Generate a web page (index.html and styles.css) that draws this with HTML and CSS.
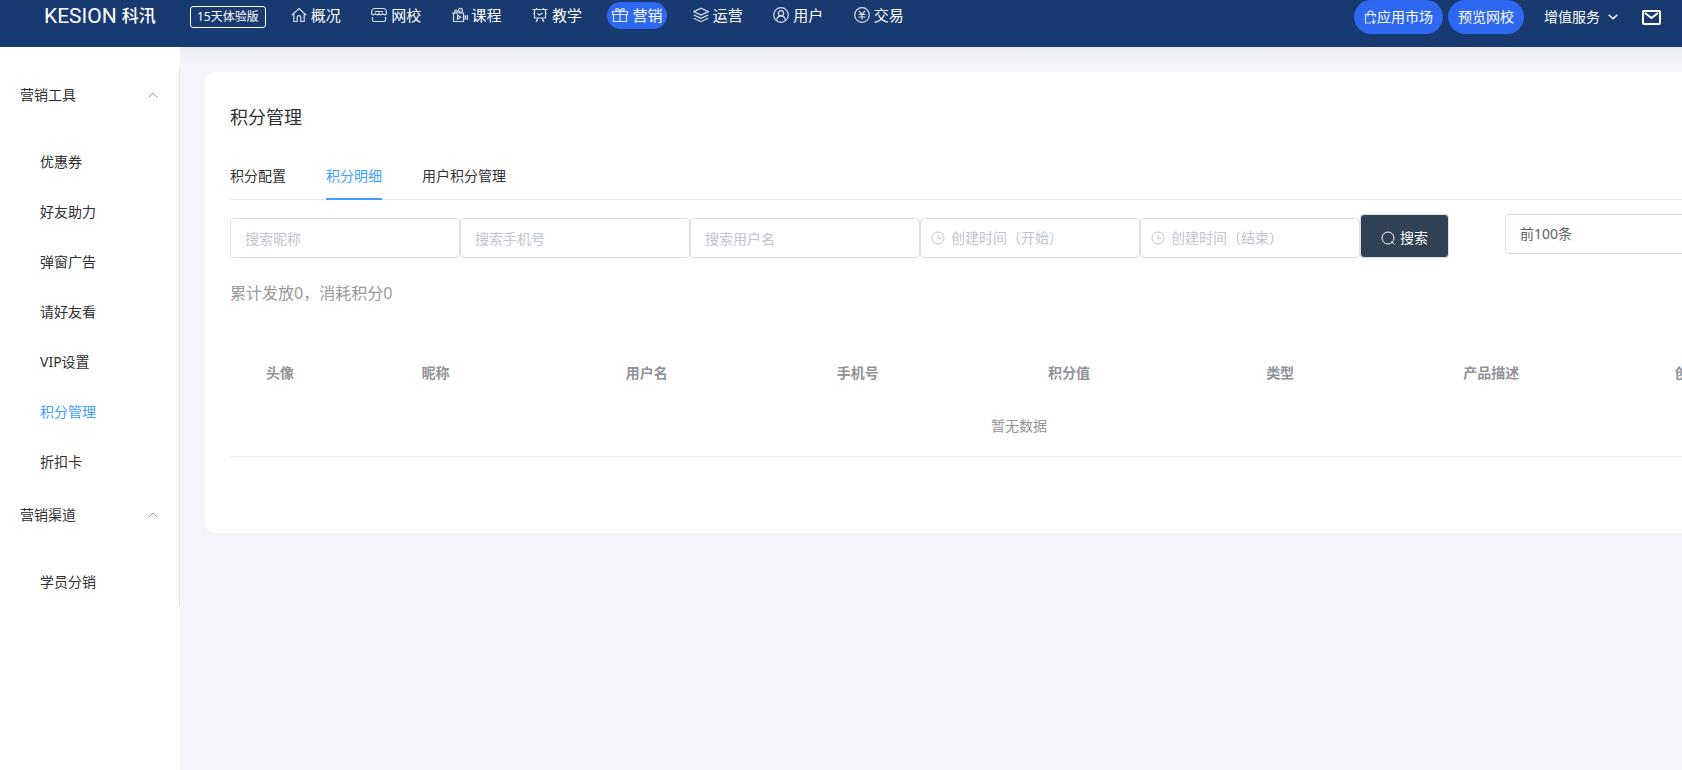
FILE: index.html
```html
<!DOCTYPE html>
<html lang="zh-CN">
<head>
<meta charset="utf-8">
<title>积分管理</title>
<link rel="stylesheet" href="styles.css">
</head>
<body>
<header class="topbar">
  <a class="logo" href="#"><span class="logo-en">KESION</span><span class="logo-cn">科汛</span></a>
  <a class="trial" href="#">15天体验版</a>
  <nav class="nav">
    <a class="nav-item" href="#"><svg class="icon" viewBox="0 0 16 16"><path d="M.7 8.2 8 1.6l7.3 6.6M2.8 6.6v7.9h3.4V10.200c0-1 .7-1.600 1.800-1.600s1.800.6 1.800 1.600v4.300h3.400V6.600"/></svg>概况</a>
    <a class="nav-item" href="#"><svg class="icon" viewBox="0 0 16 16"><path d="M3.500 1.500h9c1.500 0 2.800 1.600 2.800 3.400v1.600c0 .8-.6 1.300-1.500 1.300-1 0-1.800-.5-2.300-1.300-.5.800-1.200 1.300-1.900 1.300S8.300 7.300 8 6.500c-.3.800-.9 1.300-1.600 1.300S5 7.300 4.500 6.500C4 7.300 3.200 7.800 2.200 7.800 1.300 7.800.7 7.300.7 6.500V4.900C.7 3.100 2 1.500 3.500 1.500zM1.500 10v3c0 1 .5 1.500 1.500 1.500h10c1 0 1.500-.5 1.500-1.500v-3M4 4.500h8"/></svg>网校</a>
    <a class="nav-item" href="#"><svg class="icon" viewBox="0 0 16 16"><circle cx="4" cy="4.300" r="1.300"/><circle cx="8.500" cy="3.300" r="2"/><path d="M1.500 6.500V14.500H11.500V6H0M11.500 9H13.500V12H11.500M15.300 8v5M5.500 8.200v4l3.200-2z"/></svg>课程</a>
    <a class="nav-item" href="#"><svg class="icon" viewBox="0 0 16 16"><path d="M.5 2.500h15M2.500 2.500V11h11V2.500M5.500 6.500l2 1.500 3-2M6 11l-2 4M10 11l2 4M5 13.500h1M10 13.500h1M1 6.500h1.500M13.500 6.500H15M4.500 1v1.500M11.500 1v1.500"/></svg>教学</a>
    <a class="nav-item active" href="#"><svg class="icon" viewBox="0 0 16 16"><path d="M.6 4.500h14.800v3H.6zM1.500 7.500v7h13v-7M8 4.500v10M8 4.500C6.500 4.500 3.700 4 3.700 2.500S6.800.8 8 4.500zM8 4.500c1.500 0 4.300-.5 4.300-2S9.200.8 8 4.500z"/></svg>营销</a>
    <a class="nav-item" href="#"><svg class="icon" viewBox="0 0 16 16"><path d="M8 1.200 15.300 4.600 8 8 .7 4.600zM.7 8 8 11.400 15.300 8M.7 11.300 8 14.700l7.300-3.400"/></svg>运营</a>
    <a class="nav-item" href="#"><svg class="icon" viewBox="0 0 16 16"><circle cx="8" cy="8" r="7.300"/><circle cx="8" cy="6.200" r="2.600"/><path d="M3.600 12.800C4.200 10.200 5.800 8.800 8 8.800s3.800 1.400 4.400 4"/></svg>用户</a>
    <a class="nav-item" href="#"><svg class="icon" viewBox="0 0 16 16"><circle cx="8" cy="8" r="7.300"/><path d="m5 3.800 3 3.700 3-3.700M8 7.500v5M4.600 7.500h6.800M4.600 10h6.800"/></svg>交易</a>
  </nav>
  <div class="actions">
    <a class="pill" href="#"><svg class="icon bag" viewBox="0 0 13 14"><path d="M4 6.500V3.500C4 2 5 1 6.500 1S9 2 9 3.500v3M1 4.500h10.500v2.500M1.500 4.500v8.500h5.500M9.500 8.500v5M7.500 11l2 2.500 2-2.500"/></svg>应用市场</a>
    <a class="pill" href="#">预览网校</a>
    <button class="services" type="button">增值服务<svg class="caret" viewBox="0 0 10 6"><path d="m.7.8 4.300 4 4.300-4"/></svg></button>
    <a class="mail" href="#" aria-label="消息"><svg viewBox="0 0 19 15"><rect x="1" y="1" width="17" height="13" rx="1"/><path d="m3 3 6.500 5L16 3"/></svg></a>
  </div>
</header>
<div class="layout">
  <aside class="sidebar">
    <div class="menu">
      <button class="menu-title" type="button">营销工具<svg viewBox="0 0 10 6"><path d="m.7 5.200 4.300-4.300 4.300 4.300"/></svg></button>
      <ul class="menu-list">
        <li><a href="#">优惠券</a></li>
        <li><a href="#">好友助力</a></li>
        <li><a href="#">弹窗广告</a></li>
        <li><a href="#">请好友看</a></li>
        <li><a href="#">VIP设置</a></li>
        <li><a class="active" href="#">积分管理</a></li>
        <li><a href="#">折扣卡</a></li>
      </ul>
      <button class="menu-title" type="button">营销渠道<svg viewBox="0 0 10 6"><path d="m.7 5.200 4.300-4.300 4.300 4.300"/></svg></button>
      <ul class="menu-list">
        <li><a href="#">学员分销</a></li>
      </ul>
    </div>
  </aside>
  <main class="main">
    <section class="card">
      <h1 class="title">积分管理</h1>
      <nav class="tabs">
        <a class="tab" href="#">积分配置</a>
        <a class="tab active" href="#">积分明细</a>
        <a class="tab" href="#">用户积分管理</a>
      </nav>
      <form class="filters">
        <input class="field" type="text" placeholder="搜索昵称" aria-label="搜索昵称">
        <input class="field" type="text" placeholder="搜索手机号" aria-label="搜索手机号">
        <input class="field" type="text" placeholder="搜索用户名" aria-label="搜索用户名">
        <label class="date"><svg viewBox="0 0 14 14"><circle cx="7" cy="7" r="6"/><path d="M7 3.500V7.500h3"/></svg><input type="text" placeholder="创建时间（开始）" aria-label="创建时间（开始）"></label>
        <label class="date"><svg viewBox="0 0 14 14"><circle cx="7" cy="7" r="6"/><path d="M7 3.500V7.500h3"/></svg><input type="text" placeholder="创建时间（结束）" aria-label="创建时间（结束）"></label>
        <button class="search" type="button"><svg viewBox="0 0 14 14"><circle cx="7" cy="7" r="6"/><path d="m10.500 10.500 3 3"/></svg>搜索</button>
        <select class="limit" aria-label="显示条数"><option>前100条</option></select>
      </form>
      <p class="summary">累计发放0，消耗积分0</p>
      <table class="table">
        <thead>
          <tr><th class="avatar">头像</th><th>昵称</th><th>用户名</th><th>手机号</th><th>积分值</th><th>类型</th><th>产品描述</th><th>创建时间</th></tr>
        </thead>
        <tbody>
          <tr><td colspan="8">暂无数据</td></tr>
        </tbody>
      </table>
    </section>
  </main>
</div>
</body>
</html>
```
FILE: styles.css
```css
* {
  box-sizing: border-box;
}

body {
  margin: 0;
  min-height: 100vh;
  display: flex;
  flex-direction: column;
  overflow: hidden;
  background: #f4f5fa;
  color: #303133;
  font: 14px/20px "Noto Sans", "Noto Sans CJK SC", sans-serif;
}

a {
  color: inherit;
  text-decoration: none;
}

button,
input,
select {
  font: inherit;
  color: inherit;
}

button {
  border: 0;
  padding: 0;
  background: none;
  cursor: pointer;
}

svg {
  flex: none;
  fill: none;
  stroke: currentColor;
}

/* Top bar */
.topbar {
  display: flex;
  align-items: flex-start;
  height: 47px;
  padding: 0 21px 0 44px;
  background: #183a70;
  color: #fff;
}

.logo {
  display: flex;
  align-items: center;
  gap: 5px;
  width: 146px;
  height: 31px;
}

.logo-en {
  font: 400 21px/30px Roboto, sans-serif;
}

.logo-cn {
  font-size: 17px;
  font-weight: 500;
}

.trial {
  margin-top: 6px;
  padding: 0 6px;
  border: 1px solid #fff;
  border-radius: 3px;
  font-size: 12px;
  line-height: 20px;
}

.nav {
  display: flex;
  justify-content: space-between;
  width: 623px;
  margin: 2px 0 0 20px;
}

.nav-item {
  display: flex;
  align-items: center;
  gap: 4px;
  height: 27px;
  padding: 0 5px 2px;
  border-radius: 14px;
  font-size: 15px;
}

.nav-item.active {
  background: #2e68f0;
}

.icon {
  width: 16px;
  height: 16px;
  opacity: 0.85;
  stroke-width: 1.2;
}

.bag {
  width: 13px;
  height: 14px;
}

.actions {
  display: flex;
  align-items: center;
  height: 34px;
  margin-left: auto;
}

.pill {
  display: flex;
  align-items: center;
  height: 34px;
  margin-right: 5px;
  padding: 0 10px;
  border-radius: 17px;
  background: #2e68f0;
}

.services {
  display: flex;
  align-items: center;
  gap: 8px;
  margin: 0 24px 0 15px;
}

.caret {
  width: 10px;
  height: 6px;
  stroke-width: 1.5;
}

.mail,
.mail svg {
  display: block;
  width: 19px;
  height: 15px;
  stroke-width: 2;
}

/* Layout */
.layout {
  display: flex;
  flex: 1;
}

.sidebar {
  flex: none;
  width: 180px;
  padding-top: 20px;
  background: #fff;
}

.menu {
  border-right: 1px solid #e6e6e6;
}

.menu-title {
  display: flex;
  align-items: center;
  justify-content: space-between;
  width: 100%;
  height: 56px;
  padding: 0 21px 0 20px;
}

.menu-title svg {
  width: 10px;
  height: 6px;
  color: #909399;
}

.menu-list {
  margin: 0;
  padding: 14px 0 0;
  list-style: none;
}

.menu-list a {
  display: block;
  padding-left: 40px;
  line-height: 50px;
}

.menu-list .active {
  color: #409eff;
}

.main {
  flex: 1;
  min-width: 0;
  padding: 25px;
  background: linear-gradient(#ececf1, #f4f5fa 20px);
}

.card {
  min-width: 1628px;
  padding: 25px 25px 76px;
  border-radius: 10px;
  background: #fff;
}

.title {
  margin: 0;
  font-size: 18px;
  font-weight: 400;
  line-height: 40px;
}

.tabs {
  display: flex;
  gap: 40px;
  margin-top: 19px;
  box-shadow: inset 0 -1px #e4e7ed;
}

.tab {
  padding-bottom: 2px;
  border-bottom: 2px solid transparent;
  line-height: 40px;
}

.tab.active {
  border-color: #409eff;
  color: #409eff;
}

.filters {
  display: flex;
  align-items: flex-end;
  margin-top: 14px;
}

.field,
.date,
.limit {
  height: 40px;
  border: 1px solid #dcdfe6;
  border-radius: 4px;
  background: #fff;
}

.field {
  width: 230px;
  padding: 0 14px;
}

.date {
  display: flex;
  align-items: center;
  gap: 6px;
  width: 220px;
  padding: 0 10px;
  color: #c0c4cc;
}

.date svg,
.search svg {
  width: 14px;
  height: 14px;
}

.date input {
  flex: 1;
  min-width: 0;
  padding: 0;
  border: 0;
  outline: 0;
  color: #606266;
}

::placeholder {
  color: #c0c4cc;
  opacity: 1;
}

.search {
  display: flex;
  align-items: center;
  justify-content: center;
  gap: 5px;
  width: 89px;
  height: 44px;
  padding-top: 4px;
  border: 1px solid #dcdfe6;
  border-radius: 4px;
  background: #304156;
  color: #fff;
}

.limit {
  flex: 1;
  align-self: flex-start;
  margin-left: 56px;
  padding: 0 14px;
  appearance: none;
  color: #606266;
}

.summary {
  margin: 23px 0 0;
  color: #999;
  font-size: 16px;
  line-height: 24px;
}

.table {
  width: 100%;
  margin-top: 45px;
  table-layout: fixed;
  border-collapse: collapse;
  color: #909399;
  text-align: center;
}

.table th {
  height: 46px;
  padding: 0;
  font-weight: 700;
}

.table .avatar {
  width: 100px;
}

.table td {
  height: 60px;
  padding: 0;
  border-bottom: 1px solid #ebeef5;
}
```
